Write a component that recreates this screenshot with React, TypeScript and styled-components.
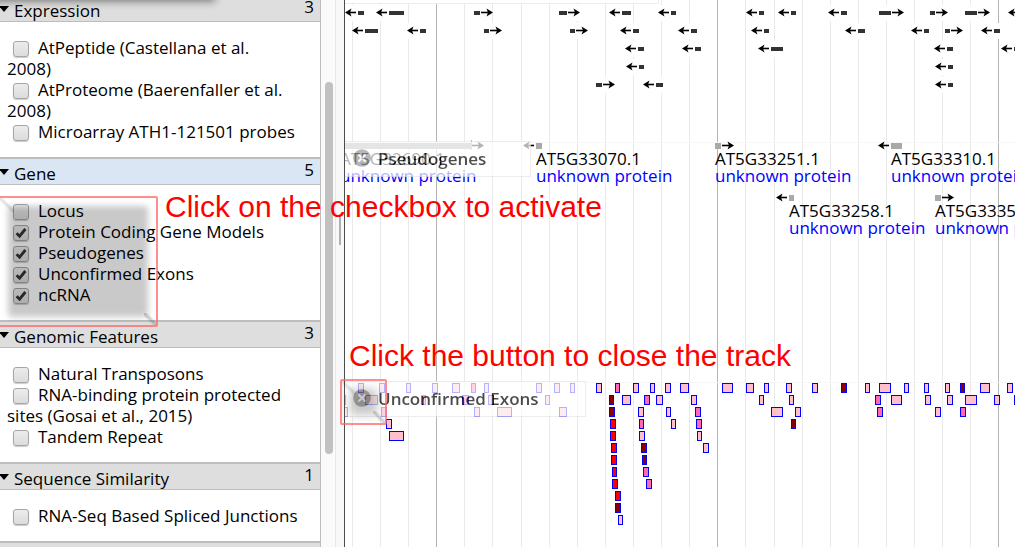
import React from "react";
import styled, { createGlobalStyle } from "styled-components";

const GlobalStyle = createGlobalStyle`
  *, *::before, *::after { box-sizing: border-box; }
  body {
    margin: 0;
    background: #fff;
    color: #000;
    font-family: "Open Sans", sans-serif;
    font-size: 17px;
    line-height: 21px;
  }
`;

/* ---------- page frame ---------- */

const Browser = styled.div`
  position: relative;
  display: flex;
  height: 100vh;
  overflow: hidden;
`;

const Sidebar = styled.aside`
  flex: none;
  display: flex;
  width: 336px;
  overflow: hidden;
`;

const FacetList = styled.div`
  position: relative;
  flex: 1;
  min-width: 0;
  overflow: hidden;
  border-right: 1px solid #bdbdbd;

  &::before {
    content: "";
    position: absolute;
    z-index: 1;
    top: -12px;
    left: -10px;
    width: 222px;
    height: 10px;
    box-shadow: 0 0 8px 3px rgba(0, 0, 0, 0.5);
  }
`;

const ScrolledContent = styled.div`
  margin-top: -6px;
`;

const ScrollTrack = styled.div`
  flex: none;
  width: 15px;
  padding-left: 4px;
  background: #fafafa;
  border-right: 1px solid #e8e8e8;
`;

const ScrollThumb = styled.div`
  width: 8px;
  height: 68vh;
  margin-top: 15vh;
  border-radius: 4px;
  background: #c1c1c1;
`;

const Splitter = styled.div`
  flex: none;
  display: flex;
  justify-content: center;
  width: 9px;
  padding-top: 215px;
  background: #f8f8f8;
  border-right: 1px solid #4c4c4c;
`;

const SplitterGrip = styled.div`
  width: 2px;
  height: 30px;
  background: #b0b0b0;
`;

/* ---------- facets ---------- */

const FacetHeader = styled.h2<{ $selected?: boolean }>`
  display: flex;
  justify-content: space-between;
  height: 28px;
  margin: 0;
  padding-right: 6px;
  border-top: 2px solid #bdbdbd;
  border-bottom: 1px solid #bdbdbd;
  background: ${(p) => (p.$selected ? "#dae6f4" : "#dedede")};
  font-size: 17px;
  font-weight: 400;
  line-height: 21px;
`;

const FacetTitle = styled.span`
  display: flex;
  align-items: center;
  padding-top: 4px;
`;

const Triangle = styled.svg`
  width: 9px;
  height: 6px;
  margin-right: 5px;
  margin-bottom: 3px;
`;

const TrackList = styled.div`
  padding: 15px 7px;
`;

const TrackLabel = styled.label`
  display: block;
  white-space: pre-line;
`;

const TrackBox = styled.input`
  appearance: none;
  width: 16px;
  height: 16px;
  margin: 0 9px 0 6px;
  vertical-align: -3px;
  border: 1px solid #a6a6a6;
  border-radius: 3px;
  background: linear-gradient(#ececec, #dcdcdc);
  box-shadow: 0 1px 1px rgba(0, 0, 0, 0.2);

  &:checked {
    background:
      url("data:image/svg+xml,%3Csvg xmlns='http://www.w3.org/2000/svg' viewBox='0 0 14 14'%3E%3Cpath d='M2.6 7.2 5.6 10.2 11.4 3' fill='none' stroke='%23333' stroke-width='2.8'/%3E%3C/svg%3E")
        center / 14px 14px no-repeat,
      linear-gradient(#ececec, #dcdcdc);
  }
`;

type Track = { name: string; checked?: boolean };
type Facet = { name: string; count: string; selected?: boolean; tracks: Track[] };

const facets: Facet[] = [
  {
    name: "Expression",
    count: "3",
    tracks: [
      { name: "AtPeptide (Castellana et al.\n2008)" },
      { name: "AtProteome (Baerenfaller et al.\n2008)" },
      { name: "Microarray ATH1-121501 probes" },
    ],
  },
  {
    name: "Gene",
    count: "5",
    selected: true,
    tracks: [
      { name: "Locus" },
      { name: "Protein Coding Gene Models", checked: true },
      { name: "Pseudogenes", checked: true },
      { name: "Unconfirmed Exons", checked: true },
      { name: "ncRNA", checked: true },
    ],
  },
  {
    name: "Genomic Features",
    count: "3",
    tracks: [
      { name: "Natural Transposons" },
      { name: "RNA-binding protein protected sites (Gosai et al., 2015)" },
      { name: "Tandem Repeat" },
    ],
  },
  {
    name: "Sequence Similarity",
    count: "1",
    tracks: [{ name: "RNA-Seq Based Spliced Junctions" }],
  },
];

function FacetSection({ facet }: { facet: Facet }) {
  return (
    <section>
      <FacetHeader $selected={facet.selected}>
        <FacetTitle>
          <Triangle viewBox="0 0 9 6" aria-hidden="true">
            <path d="M-1 0H9L4 6Z" fill="#000" />
          </Triangle>
          {facet.name}
        </FacetTitle>
        <span>{facet.count}</span>
      </FacetHeader>
      <TrackList>
        {facet.tracks.map((t) => (
          <TrackLabel key={t.name}>
            <TrackBox type="checkbox" defaultChecked={t.checked} />
            {t.name}
          </TrackLabel>
        ))}
      </TrackList>
    </section>
  );
}

/* ---------- genome view ---------- */

const View = styled.main`
  position: relative;
  flex: 1;
  min-width: 0;
`;

const Chart = styled.svg`
  display: block;
  width: 100%;
  height: 100%;
  font-family: "Open Sans", sans-serif;
  font-size: 17px;
`;

const VIEW_START = 345;
const GRID = [
  352, 380, 408, 436, 464, 492, 521, 549, 577, 605, 633, 661, 689, 717, 745, 774,
  802, 830, 858, 886, 914, 942, 970, 998,
];
const MAJOR = [436, 717, 998];

type Dir = "l" | "r";
type Transcript = [Dir, number, number, number];

const transcripts: Transcript[] = [
  ["l", 358, 6, 0], ["l", 389, 15, 0], ["r", 474, 6, 0], ["r", 559, 8, 0],
  ["l", 622, 9, 0], ["l", 671, 5, 0], ["l", 759, 5, 0], ["l", 791, 5, 0],
  ["l", 841, 6, 0], ["r", 879, 12, 0], ["r", 930, 5, 0], ["r", 965, 12, 0],
  ["l", 1021, 5, 0],
  ["l", 365, 13, 1], ["l", 420, 6, 1], ["r", 484, 5, 1], ["r", 570, 5, 1],
  ["l", 633, 6, 1], ["l", 691, 6, 1], ["l", 764, 5, 1], ["l", 858, 7, 1],
  ["l", 924, 5, 1], ["r", 945, 5, 1], ["l", 994, 6, 1],
  ["l", 638, 6, 2], ["l", 695, 6, 2], ["l", 771, 12, 2], ["l", 947, 6, 2],
  ["l", 1014, 6, 2],
  ["l", 639, 5, 3], ["l", 948, 5, 3],
  ["r", 596, 6, 4], ["l", 656, 7, 4], ["l", 948, 5, 4],
];

type Pseudogene = { id: string; dir: Dir; x: number; w: number; textX: number; y: number };

const pseudogenes: Pseudogene[] = [
  { id: "AT5G32690.1", dir: "r", x: 345, w: 126, textX: 340, y: 143 },
  { id: "AT5G33070.1", dir: "l", x: 536, w: 6, textX: 536, y: 143 },
  { id: "AT5G33251.1", dir: "r", x: 715, w: 6, textX: 715, y: 143 },
  { id: "AT5G33310.1", dir: "l", x: 891, w: 11, textX: 891, y: 143 },
  { id: "AT5G33258.1", dir: "l", x: 789, w: 5, textX: 789, y: 195 },
  { id: "AT5G33350.1", dir: "r", x: 935, w: 6, textX: 935, y: 195 },
];

const PINK = "#ffc0cb";
const HOT = "#ff69b4";
const RED = "#ff0000";
const DARK = "#8b0000";

/* One list per layout row: [x, width, fill]. */
const exonRows: [number, number, string?][][] = [
  [
    [358, 6], [379, 6], [406, 5], [432, 6], [452, 8], [471, 5, HOT], [484, 5],
    [536, 6], [554, 6], [570, 5], [596, 6], [615, 5, HOT], [633, 6], [650, 5],
    [665, 6], [680, 9], [722, 11], [746, 8], [764, 5], [786, 6], [812, 6],
    [841, 6, DARK], [865, 5], [879, 12], [904, 5], [924, 5], [945, 5],
    [960, 5, DARK], [980, 10], [1007, 6],
  ],
  [
    [340, 6], [365, 13], [421, 5, HOT], [462, 7, HOT], [488, 6], [545, 5],
    [609, 5, DARK], [622, 9], [644, 6, HOT], [656, 7], [691, 6], [759, 5],
    [789, 5], [875, 6, HOT], [891, 11], [925, 6], [947, 6], [965, 12],
    [994, 6], [1014, 6],
  ],
  [
    [340, 8], [381, 6, HOT], [474, 6], [497, 15], [559, 8], [609, 6, DARK],
    [638, 6], [666, 5], [695, 6, HOT], [771, 12], [795, 6], [877, 6, HOT],
    [935, 6], [960, 6, HOT],
  ],
  [[386, 6], [610, 6, RED], [639, 5, HOT], [671, 5], [696, 6, HOT], [791, 5, DARK]],
  [[389, 15], [610, 6, RED], [639, 6], [697, 5]],
  [[611, 6, RED], [641, 6, DARK], [703, 6]],
  [[611, 6, RED], [642, 5, DARK]],
  [[612, 5, RED], [643, 6, HOT]],
  [[612, 6, RED], [646, 6, HOT]],
  [[615, 6, RED]],
  [[615, 6, DARK]],
  [[618, 5]],
];

function Arrow({ dir, x, y, w }: { dir: Dir; x: number; y: number; w: number }) {
  return dir === "l" ? (
    <g>
      <path d={`M${x - 9} ${y}H${x - 2}`} stroke="#000" strokeWidth="1.6" />
      <path d={`M${x - 13} ${y}L${x - 6.5} ${y - 3.9}L${x - 8} ${y}L${x - 6.5} ${y + 3.9}Z`} />
    </g>
  ) : (
    <g>
      <path d={`M${x + w + 1} ${y}H${x + w + 9}`} stroke="#000" strokeWidth="1.6" />
      <path
        d={`M${x + w + 13} ${y}L${x + w + 6.5} ${y - 3.9}L${x + w + 8} ${y}L${x + w + 6.5} ${y + 3.9}Z`}
      />
    </g>
  );
}

function GenomeChart() {
  return (
    <Chart role="img" aria-label="Gene models, pseudogenes and unconfirmed exons">
      <g transform={`translate(${-VIEW_START} 0)`}>
        {GRID.map((x) => (
          <rect
            key={x}
            x={x}
            y={0}
            width={1}
            height="100%"
            fill={MAJOR.includes(x) ? "#b4b4b4" : "#eaeaea"}
          />
        ))}
        <rect x={345} y={0} width={313} height={3} fill="#fff" />
        <path d="M345 3.5H658.5V0" fill="none" stroke="#ededed" />
        <rect x={345} y={142} width="100%" height={1} fill="#f7f7f7" />
        <rect x={345} y={382} width="100%" height={1} fill="#f7f7f7" />

        {transcripts.map(([dir, x, w, row]) => (
          <g key={`${x}-${row}`}>
            <rect x={dir === "l" ? x - 12 : x} y={5 + row * 18} width={w + 12} height={16} fill="#fff" />
            <rect x={x} y={11 + row * 18} width={w} height={4} fill="#333" />
            <Arrow dir={dir} x={x} y={12.5 + row * 18} w={w} />
          </g>
        ))}

        {pseudogenes.map((g) => (
          <g key={g.id}>
            <rect x={g.x} y={g.y} width={g.w} height={6} fill="#a9a9a9" />
            <Arrow dir={g.dir} x={g.x} y={g.y + 2.5} w={g.w} />
            <text x={g.textX} y={g.y + 22}>{g.id}</text>
            <text x={g.textX} y={g.y + 39} fill="#00f">unknown protein</text>
          </g>
        ))}
        <rect x={471} y={140} width={1} height={10} fill="#3fe0d0" />

        {exonRows.map((row, r) =>
          row.map(([x, w, fill = PINK]) => (
            <rect
              key={`${x}-${r}`}
              x={x + 0.5}
              y={383.5 + r * 12}
              width={w - 1}
              height={9}
              fill={fill}
              stroke="#00f"
            />
          )),
        )}
      </g>
    </Chart>
  );
}

/* ---------- overlays ---------- */

const TrackTitle = styled.div<{ $top: number; $width: number }>`
  position: absolute;
  top: ${(p) => p.$top}px;
  left: 0;
  display: flex;
  align-items: center;
  gap: 7px;
  width: ${(p) => p.$width}px;
  height: 36px;
  padding: 0 0 2px 8px;
  border: 1px solid #e6e6e6;
  border-left: 0;
  background: #fff;
  opacity: 0.7;
  font-weight: 600;
`;

const CloseButton = styled.button`
  width: 18px;
  height: 18px;
  padding: 0;
  border: 0;
  background: none;

  svg { display: block; }
`;

const Callout = styled.div<{ $left: number; $top: number; $width: number; $height: number; $inset: number; $blur: number; $shade: number }>`
  position: absolute;
  left: ${(p) => p.$left}px;
  top: ${(p) => p.$top}px;
  width: ${(p) => p.$width}px;
  height: ${(p) => p.$height}px;
  overflow: hidden;
  border: 2px solid rgba(255, 100, 100, 0.72);
  border-radius: 2px;
  pointer-events: none;

  &::before {
    content: "";
    position: absolute;
    inset: ${(p) => p.$inset}px;
    border-radius: 4px;
    background: rgba(0, 0, 0, ${(p) => p.$shade});
    filter: blur(${(p) => p.$blur}px);
  }

  &::after {
    content: "";
    position: absolute;
    inset: 0;
    background:
      linear-gradient(45deg, transparent 36%, rgba(0, 0, 0, 0.12) 50%, transparent 64%)
        top left / 14px 14px no-repeat,
      linear-gradient(45deg, transparent 32%, rgba(0, 0, 0, 0.2) 50%, transparent 68%)
        bottom right / 12px 12px no-repeat;
  }
`;

const Note = styled.p<{ $left: number; $top: number }>`
  position: absolute;
  left: ${(p) => p.$left}px;
  top: ${(p) => p.$top}px;
  margin: 0;
  color: #f00;
  font-family: "Liberation Sans", sans-serif;
  font-size: 30px;
  line-height: 34px;
  white-space: nowrap;
  pointer-events: none;
`;

function TrackTitleBar({ name, top, width }: { name: string; top: number; width: number }) {
  return (
    <TrackTitle $top={top} $width={width}>
      <CloseButton type="button" aria-label={`Close ${name}`}>
        <svg width="18" height="18" viewBox="0 0 18 18">
          <circle cx="9" cy="9" r="8.8" fill="#999" />
          <path d="M5.5 5.5 12.5 12.5M12.5 5.5 5.5 12.5" stroke="#fff" strokeWidth="2" />
        </svg>
      </CloseButton>
      {name}
    </TrackTitle>
  );
}

export default function App() {
  return (
    <>
      <GlobalStyle />
      <Browser>
        <Sidebar>
          <FacetList>
            <ScrolledContent>
              {facets.map((f) => (
                <FacetSection key={f.name} facet={f} />
              ))}
              <FacetHeader as="div" />
            </ScrolledContent>
          </FacetList>
          <ScrollTrack>
            <ScrollThumb />
          </ScrollTrack>
        </Sidebar>
        <Splitter>
          <SplitterGrip />
        </Splitter>
        <View>
          <GenomeChart />
          <TrackTitleBar name="Pseudogenes" top={141} width={186} />
          <TrackTitleBar name="Unconfirmed Exons" top={381} width={241} />
        </View>
        <Callout $left={-2} $top={196} $width={160} $height={131} $inset={8} $blur={3} $shade={0.21} />
        <Callout $left={340} $top={379} $width={47} $height={46} $inset={8} $blur={5} $shade={0.22} />
        <Note $left={165} $top={190}>Click on the checkbox to activate</Note>
        <Note $left={349} $top={339}>Click the button to close the track</Note>
      </Browser>
    </>
  );
}
